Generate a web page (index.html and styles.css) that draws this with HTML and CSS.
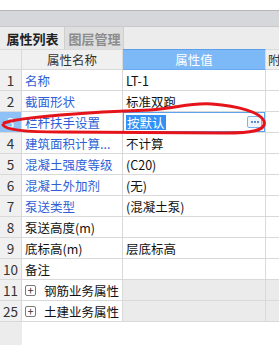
FILE: index.html
```html
<!DOCTYPE html>
<html lang="zh-CN">
<head>
  <meta charset="UTF-8" />
  <title>属性列表</title>
  <link rel="stylesheet" href="styles.css">
</head>
<body>
  <div class="panel">
    <div class="top"></div>
    <div class="band"></div>
    <div class="tabs">
      <div class="tab active">属性列表</div>
      <div class="tab">图层管理</div>
    </div>

    <div class="grid">
      <div class="cell num head"></div>
      <div class="cell head">属性名称</div>
      <div class="cell head value-head">属性值</div>
      <div class="cell head extra">附</div>

      <div class="cell num">1</div>
      <div class="cell name blue">名称</div>
      <div class="cell val">LT-1</div>
      <div class="cell extra"></div>

      <div class="cell num">2</div>
      <div class="cell name blue">截面形状</div>
      <div class="cell val">标准双跑</div>
      <div class="cell extra"></div>

      <div class="cell num selected">3</div>
      <div class="cell name blue">栏杆扶手设置</div>
      <div class="cell val editing">
        <div class="editor">
          <span class="sel">按默认</span>
          <span class="dots">
            <svg width="12" height="10" viewBox="0 0 12 10">
              <circle cx="3" cy="5" r="1" fill="#2a6dc0"/>
              <circle cx="6" cy="5" r="1" fill="#2a6dc0"/>
              <circle cx="9" cy="5" r="1" fill="#2a6dc0"/>
            </svg>
          </span>
        </div>
      </div>
      <div class="cell extra"></div>

      <div class="cell num">4</div>
      <div class="cell name blue">建筑面积计算...</div>
      <div class="cell val">不计算</div>
      <div class="cell extra"></div>

      <div class="cell num">5</div>
      <div class="cell name blue">混凝土强度等级</div>
      <div class="cell val">(C20)</div>
      <div class="cell extra"></div>

      <div class="cell num">6</div>
      <div class="cell name blue">混凝土外加剂</div>
      <div class="cell val">(无)</div>
      <div class="cell extra"></div>

      <div class="cell num">7</div>
      <div class="cell name blue">泵送类型</div>
      <div class="cell val">(混凝土泵)</div>
      <div class="cell extra"></div>

      <div class="cell num">8</div>
      <div class="cell name">泵送高度(m)</div>
      <div class="cell val"></div>
      <div class="cell extra"></div>

      <div class="cell num">9</div>
      <div class="cell name">底标高(m)</div>
      <div class="cell val">层底标高</div>
      <div class="cell extra"></div>

      <div class="cell num">10</div>
      <div class="cell name">备注</div>
      <div class="cell val"></div>
      <div class="cell extra"></div>

      <div class="cell num">11</div>
      <div class="cell name group"><span class="plus">+</span>钢筋业务属性</div>
      <div class="cell val group-val"></div>
      <div class="cell extra group-val"></div>

      <div class="cell num">25</div>
      <div class="cell name group"><span class="plus">+</span>土建业务属性</div>
      <div class="cell val group-val"></div>
      <div class="cell extra group-val"></div>
    </div>

    <div class="rest">
      <div class="rest-num"></div>
    </div>

    <!-- hand-drawn red mark around row 3 -->
    <svg class="mark" width="279" height="345" viewBox="0 0 279 345">
      <path d="M4 123 C 20 117, 90 112, 150 110 C 175 109, 190 102, 212 104 C 238 106, 260 112, 264 121 C 267 131, 250 133, 225 133 L 60 132 C 30 132, 6 130, 3 125"
            fill="none" stroke="#e5141b" stroke-width="3" stroke-linecap="round" stroke-linejoin="round"/>
    </svg>
  </div>
</body>
</html>
```

FILE: styles.css
```css
body {
  margin: 0;
  background: white;
  font-family: "Noto Sans CJK SC", "Noto Sans", sans-serif;
  overflow: hidden;
}

.panel {
  position: relative;
  width: 279px;
  height: 345px;
  display: flex;
  flex-direction: column;
}

.top {
  height: 10px;
  background: white;
}

.band {
  height: 15px;
  background: #d6d7db;
  border-top: 1px solid #b6b6b6;
}

.tabs {
  display: flex;
  height: 22px;
  background: #ececec;
  border-top: 1px solid #c9c9c9;
}

.tab {
  width: 57px;
  padding-left: 1px;
  display: flex;
  align-items: center;
  justify-content: center;
  font-size: 13px;
  font-weight: bold;
  color: #8c8c8c;
  background: #dedede;
  border-right: 1px solid #cfcfcf;
}

.tab.active {
  width: 63px;
  color: #222;
  background: #ececec;
}

.grid {
  display: grid;
  grid-template-columns: 22px 101px 143px 1fr;
  grid-auto-rows: 21px;
}

.cell {
  box-sizing: border-box;
  border-right: 1px solid #d9d9d9;
  border-bottom: 1px solid #d9d9d9;
  display: flex;
  align-items: center;
  font-size: 12.5px;
  color: #111;
  white-space: nowrap;
  overflow: hidden;
}

.head {
  justify-content: center;
  background: #f0f0f0;
  color: #333;
  border-top: 1px solid #dadada;
}

.value-head {
  background: #7db9f6;
  color: white;
  border-top: 1px solid #5c9fe8;
  border-bottom: 1px solid #6aaaf0;
}

.head.extra {
  justify-content: flex-start;
  padding-left: 2px;
}

.num {
  justify-content: center;
  background: #f0f0f0;
  font-size: 13.5px;
  color: #333;
}

.num.selected {
  background: #8ec2f6;
  color: white;
}

.name {
  padding-left: 3px;
}

.blue {
  color: #2f5fd6;
}

.val {
  padding-left: 3px;
}

.extra {
  border-right: none;
}

.editing {
  padding: 0;
}

.editor {
  flex: 1;
  height: 100%;
  box-sizing: border-box;
  border: 1px solid #5fa2ec;
  display: flex;
  align-items: center;
  justify-content: space-between;
  padding: 0 2px 0 2px;
}

.sel {
  background: #3390f5;
  color: white;
  padding: 0 1px;
  line-height: 15px;
}

.dots {
  width: 15px;
  height: 12px;
  box-sizing: border-box;
  border: 1px solid #7fb3e8;
  border-radius: 2px;
  background: #eef5fc;
  display: flex;
  align-items: center;
  justify-content: center;
}

.group {
  padding-left: 3px;
  gap: 8px;
}

.plus {
  width: 11px;
  height: 11px;
  box-sizing: border-box;
  border: 1px solid #7a7a7a;
  border-radius: 2px;
  font-size: 11px;
  line-height: 8px;
  text-align: center;
  color: #333;
}

.group-val {
  background: #ebebeb;
}

.rest {
  flex: 1;
  display: flex;
}

.rest-num {
  width: 22px;
  background: #ececec;
}

.mark {
  position: absolute;
  left: 0;
  top: 0;
  pointer-events: none;
}
```
